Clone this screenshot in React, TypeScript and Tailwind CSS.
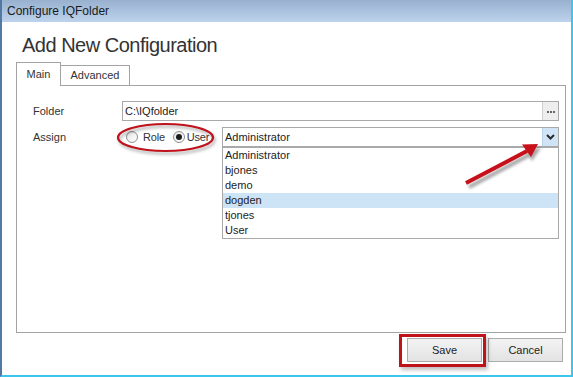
import React from 'react';

const users = ['Administrator', 'bjones', 'demo', 'dogden', 'tjones', 'User'];

function Radio({ checked }: { checked?: boolean }) {
  return (
    <span className="w-[12px] h-[12px] rounded-full border border-[#8e8f8f] bg-gradient-to-br from-[#e6e6e6] to-white flex items-center justify-center">
      {checked && <span className="w-[6px] h-[6px] rounded-full bg-[#1c1c1c]"></span>}
    </span>
  );
}

export default function App() {
  return (
    <div className="relative w-[573px] h-[377px] overflow-hidden bg-white flex flex-col border-l-2 border-r-2 border-b-2 border-l-[#5279a4] border-r-[#3cc6ee] border-b-[#3cc6ee] font-['Liberation_Sans',Arial,sans-serif] text-[#333]">
      {/* title bar */}
      <div className="h-[22px] shrink-0 bg-gradient-to-b from-[#98b1cf] to-[#bdd3ed] flex items-center pl-[5px] text-[12px] text-[#1a1a1a]">
        Configure IQFolder
      </div>

      <h1 className="mt-[11px] ml-[20px] text-[20px] leading-[24px] tracking-[-0.5px] text-[#333]">Add New Configuration</h1>

      {/* tabs */}
      <div className="mt-[5px] ml-[14px] flex items-end relative z-10 -mb-px text-[11px]">
        <div className="w-[45px] h-[24px] border-l border-t border-r border-[#a3a3a3] bg-white flex items-center justify-center">Main</div>
        <div className="w-[69px] h-[21px] border-t border-r border-[#a3a3a3] flex items-center justify-center pb-[2px]">Advanced</div>
      </div>

      {/* panel */}
      <div className="ml-[14px] w-[550px] h-[248px] border border-[#a3a3a3] pt-[15px] pl-[16px] text-[11px]">
        <div className="flex items-center h-[20px]">
          <span className="w-[89px]">Folder</span>
          <div className="w-[437px] h-[20px] border border-[#a9a9a9] flex items-stretch">
            <span className="flex-1 pl-[2px] flex items-center text-[#222]">C:\IQfolder</span>
            <span className="w-[16px] bg-[#eeeeee] border-l border-[#d0d0d0] flex items-center justify-center gap-[1px] pt-[1px]">
              <span className="w-[2px] h-[2px] bg-[#666]"></span>
              <span className="w-[2px] h-[2px] bg-[#666]"></span>
              <span className="w-[2px] h-[2px] bg-[#666]"></span>
            </span>
          </div>
        </div>

        <div className="flex items-start mt-[6px]">
          <span className="w-[89px] h-[20px] flex items-center">Assign</span>
          <div className="w-[100px] h-[20px] flex items-center tracking-[-0.2px]">
            <span className="ml-[4px]"><Radio /></span>
            <span className="ml-[5px]">Role</span>
            <span className="ml-[8px]"><Radio checked /></span>
            <span className="ml-[2px]">User</span>
          </div>
          <div className="w-[337px] flex flex-col">
            <div className="h-[20px] border border-[#a9a9a9] flex items-stretch">
              <span className="flex-1 pl-[2px] flex items-center text-[#222]">Administrator</span>
              <span className="w-[16px] bg-[#cfe4f7] border-l border-[#b9d4ec] flex items-center justify-center">
                <svg width="9" height="6" viewBox="0 0 9 6">
                  <path d="M1 1 L4.5 4.5 L8 1" fill="none" stroke="#2b2b2b" strokeWidth="2" />
                </svg>
              </span>
            </div>
            <div className="border border-[#a9a9a9] flex flex-col">
              {users.map((u) => (
                <div key={u} className={`h-[15px] leading-[15px] pl-[2px] text-[#222] ${u === 'dogden' ? 'bg-[#cde3f6]' : ''}`}>
                  {u}
                </div>
              ))}
            </div>
          </div>
        </div>
      </div>

      {/* buttons */}
      <div className="mt-[5px] flex justify-end gap-[6px] pr-[8px] text-[11px]">
        <div className="relative">
          <div className="absolute left-[-8px] top-[-4px] w-[87px] h-[33px] border-[3px] border-[#c0121b] shadow-[2px_3px_4px_rgba(0,0,0,0.25)]"></div>
          <button className="w-[75px] h-[24px] border border-[#acacac] bg-gradient-to-b from-[#f3f3f3] to-[#e3e3e3] text-[#222]">Save</button>
        </div>
        <button className="w-[75px] h-[24px] border border-[#acacac] bg-gradient-to-b from-[#f3f3f3] to-[#e3e3e3] text-[#222]">Cancel</button>
      </div>

      {/* annotations */}
      <svg className="absolute left-[-2px] top-0 pointer-events-none" width="573" height="377" viewBox="0 0 573 377">
        <defs>
          <filter id="sh" x="-20%" y="-20%" width="140%" height="140%">
            <feGaussianBlur stdDeviation="1.5" />
          </filter>
        </defs>
        <ellipse cx="167" cy="140" rx="47.5" ry="13.5" fill="none" stroke="#000" strokeOpacity="0.28" strokeWidth="2.5" filter="url(#sh)" />
        <ellipse cx="165.5" cy="137.5" rx="47.5" ry="13.5" fill="none" stroke="#c0121b" strokeWidth="2.2" />
        <g filter="url(#sh)" opacity="0.35">
          <line x1="469" y1="187" x2="529" y2="155" stroke="#000" strokeWidth="4" />
          <polygon points="541,148 532,161 525,149" fill="#000" />
        </g>
        <line x1="466" y1="183" x2="527" y2="151" stroke="#c8101a" strokeWidth="4" />
        <polygon points="538,144 531,157 522,144.5" fill="#c8101a" />
      </svg>
    </div>
  );
}
